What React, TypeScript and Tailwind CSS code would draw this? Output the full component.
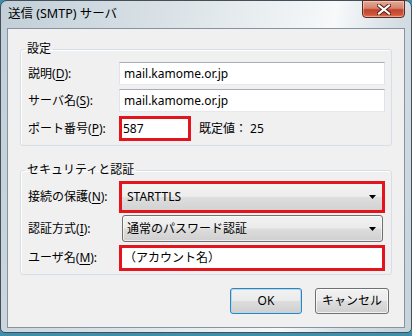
import type { ReactNode } from 'react'

function Label({ text, k }: { text: string; k: string }) {
  return (
    <span className="w-[91px] shrink-0 text-[12px] leading-[14px] text-black">
      {text}(<u className="underline-offset-[2px]">{k}</u>):
    </span>
  )
}

function Arrow() {
  return (
    <svg width="7" height="4" viewBox="0 0 7 4" className="mr-[6px] shrink-0">
      <path d="M0 0h7L3.5 4z" fill="#000" />
    </svg>
  )
}

function Row({ h, className, children }: { h: string; className?: string; children: ReactNode }) {
  return <div className={`flex items-center ${h} ${className ?? ''}`}>{children}</div>
}

export default function App() {
  return (
    <div className="w-[412px] h-[336px] overflow-hidden bg-[#3d8fab] font-['Noto_Sans','Noto_Sans_CJK_JP',sans-serif]">
      <div className="h-[333px] rounded-t-[7px] rounded-b-[5px] border border-[#43505a] bg-[linear-gradient(100deg,#c2cfd8_0%,#d9e1e6_35%,#eef2f4_62%,#f7f9fa_72%,#d3dde3_86%,#c6d3db_100%)]">
        {/* title bar */}
        <div className="flex h-[27px] items-start justify-between">
          <span className="ml-[7px] mt-[5px] text-[12.5px] leading-[16px] text-black">送信 (SMTP) サーバ</span>
          <button
            aria-label="閉じる"
            className="mr-[6px] mt-[-1px] flex h-[18px] w-[43px] items-center justify-center rounded-b-[4px] border border-[#5b2a22] bg-[linear-gradient(#e3ab9a,#d6836c_45%,#c2432c_55%,#d0563a_85%,#e27b5a)] shadow-[inset_0_0_0_1px_rgba(255,255,255,0.35)]"
          >
            <svg width="14" height="11" viewBox="0 0 14 11">
              <path d="M2 1.5l10 8M12 1.5l-10 8" stroke="#4a1a12" strokeWidth="4" strokeLinecap="square" />
              <path d="M2 1.5l10 8M12 1.5l-10 8" stroke="#fff" strokeWidth="2.2" strokeLinecap="square" />
            </svg>
          </button>
        </div>

        {/* client area */}
        <div className="mx-[6px] flex h-[300px] flex-col border border-[#8793a0] bg-[#f0f0f0] px-[12px] pt-[13px]">
          {/* 設定 */}
          <fieldset className="rounded-[3px] border border-[#d5dfe5] pl-[7px] pr-[6px] pt-[6px] pb-[4px] shadow-[inset_1px_1px_0_#fff]">
            <legend className="ml-[-3px] px-[2px] text-[12px] leading-[14px]">設定</legend>
            <Row h="h-[23px]">
              <Label text="説明" k="D" />
              <div className="flex h-[23px] flex-1 items-center border border-[#abadb3] border-x-[#e2e3ea] border-b-[#e3e9ef] bg-white pl-[4px] text-[12px]">
                mail.kamome.or.jp
              </div>
            </Row>
            <Row h="h-[23px]" className="mt-[4px]">
              <Label text="サーバ名" k="S" />
              <div className="flex h-[23px] flex-1 items-center border border-[#abadb3] border-x-[#e2e3ea] border-b-[#e3e9ef] bg-white pl-[4px] text-[12px]">
                mail.kamome.or.jp
              </div>
            </Row>
            <Row h="h-[25px]" className="mt-[4px]">
              <Label text="ポート番号" k="P" />
              <div className="flex h-[25px] w-[72px] items-center border-[3px] border-[#e3141c] bg-white pl-[1px] text-[12px]">
                587
              </div>
              <span className="ml-[8px] text-[12px]">既定値：</span>
              <span className="ml-[3px] text-[12px]">25</span>
            </Row>
          </fieldset>

          {/* セキュリティと認証 */}
          <fieldset className="mt-[17px] rounded-[3px] border border-[#d5dfe5] pl-[7px] pr-[6px] pt-[4px] pb-[3px] shadow-[inset_1px_1px_0_#fff]">
            <legend className="ml-[-3px] px-[2px] text-[12px] leading-[14px]">セキュリティと認証</legend>
            <Row h="h-[32px]">
              <Label text="接続の保護" k="N" />
              <div className="flex h-[32px] flex-1 items-center justify-between border-[3px] border-[#e3141c] bg-[linear-gradient(#f4f4f4,#ececec_48%,#dedede_52%,#d2d2d2)] pl-[5px] text-[12px]">
                <span>STARTTLS</span>
                <Arrow />
              </div>
            </Row>
            <Row h="h-[27px]" className="mt-[2px]">
              <Label text="認証方式" k="I" />
              <div className="ml-[3px] flex h-[27px] w-[261px] items-center justify-between rounded-[3px] border border-[#707070] bg-[linear-gradient(#f2f2f2,#ebebeb_48%,#dddddd_52%,#cfcfcf)] pl-[4px] text-[12px] shadow-[inset_0_0_0_1px_rgba(255,255,255,0.6)]">
                <span>通常のパスワード認証</span>
                <Arrow />
              </div>
            </Row>
            <Row h="h-[26px]" className="mt-[3px]">
              <Label text="ユーザ名" k="M" />
              <div className="flex h-[26px] flex-1 items-center border-[3px] border-[#e3141c] bg-white pl-[2px] text-[12px]">
                （アカウント名）
              </div>
            </Row>
          </fieldset>

          {/* buttons */}
          <div className="mt-[13px] mr-[3px] flex justify-end gap-[13px]">
            <button className="flex h-[26px] w-[72px] items-center justify-center rounded-[3px] border border-[#3c7fb1] bg-[linear-gradient(#f2f2f2,#ebebeb_48%,#dddddd_52%,#cfcfcf)] text-[12px] text-black shadow-[inset_0_0_0_1px_#a9dcf5]">
              OK
            </button>
            <button className="flex h-[26px] w-[74px] items-center justify-center rounded-[3px] border border-[#707070] bg-[linear-gradient(#f2f2f2,#ebebeb_48%,#dddddd_52%,#cfcfcf)] text-[12px] text-black shadow-[inset_0_0_0_1px_rgba(255,255,255,0.7)]">
              キャンセル
            </button>
          </div>
        </div>
      </div>
    </div>
  )
}
